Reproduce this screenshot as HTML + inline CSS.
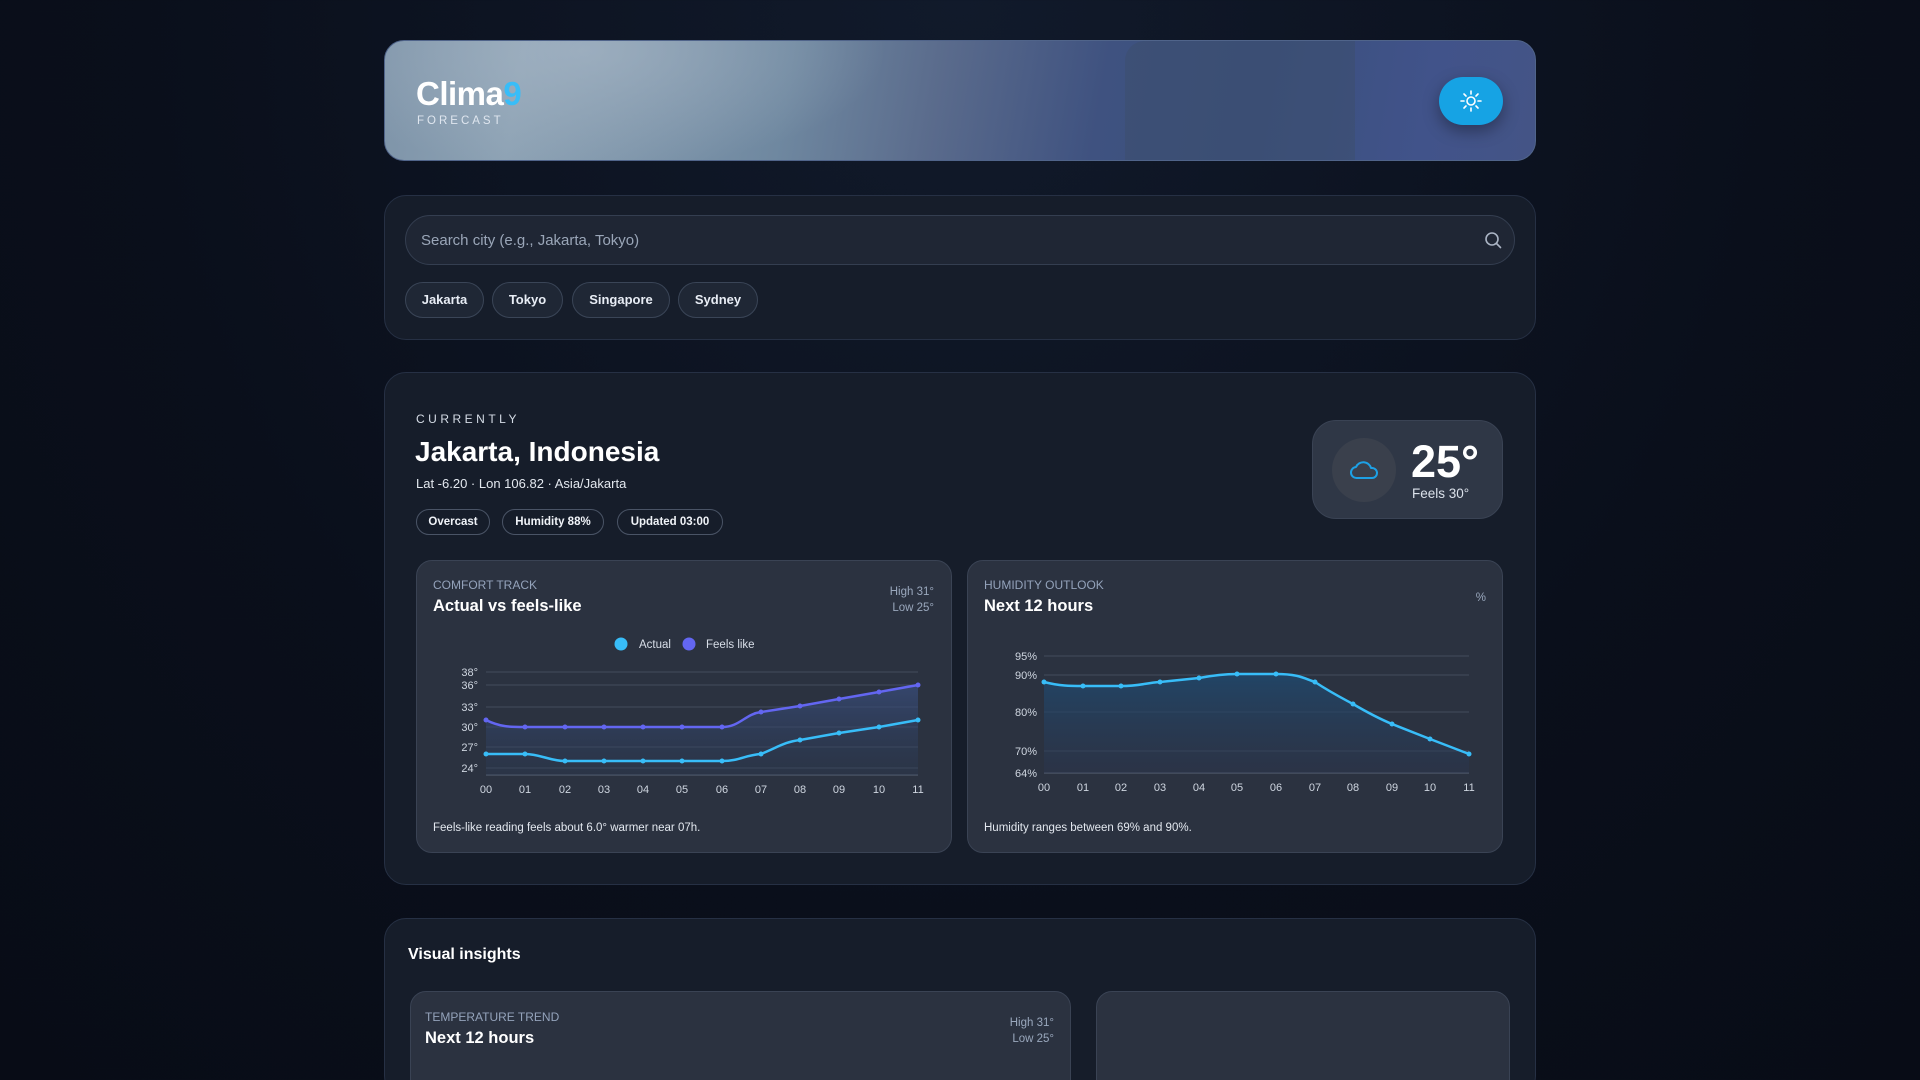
<!DOCTYPE html>
<html><head><meta charset="utf-8"><style>
*{box-sizing:border-box;margin:0;padding:0}
html{width:1920px;height:1080px;overflow:hidden}
body{width:1920px;height:1080px;overflow:hidden;background:radial-gradient(ellipse at 50% 0%,#111a2b 0%,#0a0f1b 60%,#080c16 100%);font-family:"Liberation Sans",sans-serif;color:#e8edf5;position:relative}
.a{position:absolute}
.card{position:absolute;background:#161d2a;border:1px solid #263044;border-radius:22px}
.chip{position:absolute;height:36px;border:1px solid #3a4557;border-radius:18px;background:#1f2735;font-size:13px;font-weight:bold;color:#e8edf5;line-height:34px;text-align:center}
.badge{position:absolute;height:26px;border:1px solid #4a5466;border-radius:13px;background:#161d2a;font-size:11.5px;font-weight:bold;line-height:24px;text-align:center;color:#f0f3f8}
.cc{position:absolute;background:#2b3240;border:1px solid #3a4354;border-radius:16px}
.lbl{font-size:12px;color:#94a3bb;text-transform:uppercase}
.ttl{font-size:16.5px;font-weight:bold;color:#fff}
.sm{font-size:11.5px;color:#9aa8bd;text-align:right}
svg text{font-family:"Liberation Sans",sans-serif}
</style></head><body>
<div class="a" style="left:384px;top:40px;width:1152px;height:121px;border-radius:20px;border:1px solid #50648a;background:radial-gradient(ellipse 300px 120px at 200px 10px,rgba(170,185,200,.6),transparent),linear-gradient(100deg,#7d93a8 0%,#8da2b4 12%,#6f88a0 35%,#5a6b8c 48%,#3f5280 62%,#3a4f7c 75%,#41538a 90%,#445486 100%);overflow:hidden">
<div class="a" style="left:740px;top:0;width:230px;height:121px;background:rgba(60,78,110,.55);border-radius:20px 0 0 0"></div>
</div>
<div class="a" style="left:416px;top:75px;font-size:33px;font-weight:bold;color:#fff;letter-spacing:-0.5px">Clima<span style="color:#38bdf8">9</span></div>
<div class="a" style="left:417px;top:115px;font-size:11.5px;letter-spacing:3px;color:#dfe6ef">FORECAST</div>
<div class="a" style="left:1439px;top:77px;width:64px;height:48px;border-radius:24px;background:#16a3e4;box-shadow:0 6px 16px rgba(0,0,0,.35)">
<svg width="64" height="48" viewBox="0 0 64 48"><g stroke="#fff" stroke-width="1.6" fill="none" stroke-linecap="round"><circle cx="32" cy="24" r="4"/><path d="M32 14v3M32 31v3M22 24h3M39 24h3M25 17l2 2M37 29l2 2M25 31l2-2M37 19l2-2"/></g></svg></div>
<div class="card" style="left:384px;top:195px;width:1152px;height:145px"></div>
<div class="a" style="left:405px;top:215px;width:1110px;height:50px;border:1px solid #343e50;border-radius:25px;background:#1f2634"></div>
<div class="a" style="left:421px;top:232px;font-size:15px;color:#9aa6b8">Search city (e.g., Jakarta, Tokyo)</div>
<svg class="a" style="left:1483px;top:230px" width="20" height="20" viewBox="0 0 20 20"><circle cx="9" cy="9" r="6" stroke="#aab4c4" stroke-width="1.6" fill="none"/><path d="M13.5 13.5l4 4" stroke="#aab4c4" stroke-width="1.6" stroke-linecap="round"/></svg>
<div class="chip" style="left:405px;top:282px;width:79px">Jakarta</div>
<div class="chip" style="left:492px;top:282px;width:71px">Tokyo</div>
<div class="chip" style="left:572px;top:282px;width:98px">Singapore</div>
<div class="chip" style="left:678px;top:282px;width:80px">Sydney</div>
<div class="card" style="left:384px;top:372px;width:1152px;height:513px"></div>
<div class="a" style="left:416px;top:412px;font-size:12px;letter-spacing:3.5px;color:#d5dce6">CURRENTLY</div>
<div class="a" style="left:415px;top:436px;font-size:28px;font-weight:bold;color:#fff">Jakarta, Indonesia</div>
<div class="a" style="left:416px;top:476px;font-size:13px;color:#e3e8ef">Lat -6.20 · Lon 106.82 · Asia/Jakarta</div>
<div class="badge" style="left:416px;top:509px;width:74px">Overcast</div>
<div class="badge" style="left:502px;top:509px;width:102px">Humidity 88%</div>
<div class="badge" style="left:617px;top:509px;width:106px">Updated 03:00</div>
<div class="a" style="left:1312px;top:420px;width:191px;height:99px;border-radius:24px;background:#2f3746;border:1px solid #3a4354"></div>
<div class="a" style="left:1332px;top:438px;width:64px;height:64px;border-radius:32px;background:#3a404c"></div>
<svg class="a" style="left:1348px;top:457px" width="32" height="26" viewBox="0 0 32 26"><path d="M9 21h15a5 5 0 0 0 0-10h-1A8 8 0 0 0 8 10a5.5 5.5 0 0 0 1 11z" fill="none" stroke="#1da1e6" stroke-width="2" stroke-linejoin="round"/></svg>
<div class="a" style="left:1411px;top:437px;font-size:45px;color:#fff;font-weight:bold;line-height:50px">25°</div>
<div class="a" style="left:1412px;top:486px;font-size:13.5px;color:#dbe1ea">Feels 30°</div>
<div class="cc" style="left:416px;top:560px;width:536px;height:293px"></div>
<div class="a lbl" style="left:433px;top:578px">Comfort track</div>
<div class="a ttl" style="left:433px;top:597px">Actual vs feels-like</div>
<div class="a sm" style="left:850px;top:584px;width:84px;line-height:16px">High 31°<br>Low 25°</div>
<div class="a" style="left:433px;top:822px;font-size:11.5px;color:#e3e8ef">Feels-like reading feels about 6.0° warmer near 07h.</div>
<div class="cc" style="left:967px;top:560px;width:536px;height:293px"></div>
<div class="a lbl" style="left:984px;top:578px">Humidity outlook</div>
<div class="a ttl" style="left:984px;top:597px">Next 12 hours</div>
<div class="a sm" style="left:1470px;top:592px;width:16px">%</div>
<div class="a" style="left:984px;top:822px;font-size:11.5px;color:#e3e8ef">Humidity ranges between 69% and 90%.</div>
<svg class="a" style="left:0;top:0" width="1920" height="1080">
<defs>
<linearGradient id="g1" x1="0" y1="0" x2="0" y2="1"><stop offset="0" stop-color="#3a4f80" stop-opacity=".7"/><stop offset="1" stop-color="#2a3a55" stop-opacity=".3"/></linearGradient>
<linearGradient id="g2" x1="0" y1="0" x2="0" y2="1"><stop offset="0" stop-color="#1f4a70" stop-opacity=".8"/><stop offset="1" stop-color="#2b3650" stop-opacity=".4"/></linearGradient>
</defs>
<circle cx="621" cy="644" r="6.5" fill="#38bdf8"/><text x="639" y="648" font-size="11.5" fill="#d8dee8">Actual</text>
<circle cx="689" cy="644" r="6.5" fill="#6366f1"/><text x="706" y="648" font-size="11.5" fill="#d8dee8">Feels like</text>
<g stroke="#434c5c" stroke-width="1"><path d="M486 672H918M486 685H918M486 707H918M486 727H918M486 747H918M486 768H918"/><path d="M486 775H918" stroke="#5a6476"/></g>
<g font-size="11" fill="#cfd6e0" text-anchor="end"><text x="478" y="676">38°</text><text x="478" y="689">36°</text><text x="478" y="711">33°</text><text x="478" y="731">30°</text><text x="478" y="751">27°</text><text x="478" y="772">24°</text></g>
<g font-size="11" fill="#cfd6e0" text-anchor="middle"><text x="486" y="793">00</text><text x="525" y="793">01</text><text x="565" y="793">02</text><text x="604" y="793">03</text><text x="643" y="793">04</text><text x="682" y="793">05</text><text x="722" y="793">06</text><text x="761" y="793">07</text><text x="800" y="793">08</text><text x="839" y="793">09</text><text x="879" y="793">10</text><text x="918" y="793">11</text></g>
<path d="M486 720C500 727 510 727 525 727L722 727C740 727 745 714 761 712L800 706 839 699 879 692 918 685V775H486Z" fill="url(#g1)"/>
<path d="M486 720C500 727 510 727 525 727L722 727C740 727 745 714 761 712L800 706 839 699 879 692 918 685" fill="none" stroke="#6366f1" stroke-width="2.5"/>
<path d="M486 754L525 754C540 754 550 761 565 761L722 761C740 761 745 755 761 754C780 746 785 742 800 740L839 733 879 727 918 720" fill="none" stroke="#38bdf8" stroke-width="2.5"/>
<g fill="#6366f1"><circle cx="486" cy="720" r="2.5"/><circle cx="525" cy="727" r="2.5"/><circle cx="565" cy="727" r="2.5"/><circle cx="604" cy="727" r="2.5"/><circle cx="643" cy="727" r="2.5"/><circle cx="682" cy="727" r="2.5"/><circle cx="722" cy="727" r="2.5"/><circle cx="761" cy="712" r="2.5"/><circle cx="800" cy="706" r="2.5"/><circle cx="839" cy="699" r="2.5"/><circle cx="879" cy="692" r="2.5"/><circle cx="918" cy="685" r="2.5"/></g>
<g fill="#38bdf8"><circle cx="486" cy="754" r="2.5"/><circle cx="525" cy="754" r="2.5"/><circle cx="565" cy="761" r="2.5"/><circle cx="604" cy="761" r="2.5"/><circle cx="643" cy="761" r="2.5"/><circle cx="682" cy="761" r="2.5"/><circle cx="722" cy="761" r="2.5"/><circle cx="761" cy="754" r="2.5"/><circle cx="800" cy="740" r="2.5"/><circle cx="839" cy="733" r="2.5"/><circle cx="879" cy="727" r="2.5"/><circle cx="918" cy="720" r="2.5"/></g>
<g stroke="#434c5c" stroke-width="1"><path d="M1044 656H1469M1044 675H1469M1044 712H1469M1044 751H1469"/><path d="M1044 773H1469" stroke="#5a6476"/></g>
<g font-size="11" fill="#cfd6e0" text-anchor="end"><text x="1037" y="660">95%</text><text x="1037" y="679">90%</text><text x="1037" y="716">80%</text><text x="1037" y="755">70%</text><text x="1037" y="777">64%</text></g>
<g font-size="11" fill="#cfd6e0" text-anchor="middle"><text x="1044" y="791">00</text><text x="1083" y="791">01</text><text x="1121" y="791">02</text><text x="1160" y="791">03</text><text x="1199" y="791">04</text><text x="1237" y="791">05</text><text x="1276" y="791">06</text><text x="1315" y="791">07</text><text x="1353" y="791">08</text><text x="1392" y="791">09</text><text x="1430" y="791">10</text><text x="1469" y="791">11</text></g>
<path d="M1044 682C1060 686 1070 686 1083 686L1121 686C1140 686 1145 683 1160 682L1199 678C1215 675 1225 674 1237 674L1276 674C1300 674 1305 679 1315 682C1330 692 1340 697 1353 704C1370 714 1380 719 1392 724L1430 739 1469 754V773H1044Z" fill="url(#g2)"/>
<path d="M1044 682C1060 686 1070 686 1083 686L1121 686C1140 686 1145 683 1160 682L1199 678C1215 675 1225 674 1237 674L1276 674C1300 674 1305 679 1315 682C1330 692 1340 697 1353 704C1370 714 1380 719 1392 724L1430 739 1469 754" fill="none" stroke="#38bdf8" stroke-width="2.5"/>
<g fill="#38bdf8"><circle cx="1044" cy="682" r="2.5"/><circle cx="1083" cy="686" r="2.5"/><circle cx="1121" cy="686" r="2.5"/><circle cx="1160" cy="682" r="2.5"/><circle cx="1199" cy="678" r="2.5"/><circle cx="1237" cy="674" r="2.5"/><circle cx="1276" cy="674" r="2.5"/><circle cx="1315" cy="682" r="2.5"/><circle cx="1353" cy="704" r="2.5"/><circle cx="1392" cy="724" r="2.5"/><circle cx="1430" cy="739" r="2.5"/><circle cx="1469" cy="754" r="2.5"/></g>
</svg>
<div class="card" style="left:384px;top:918px;width:1152px;height:180px"></div>
<div class="a" style="left:408px;top:946px;font-size:16px;font-weight:bold;color:#fff">Visual insights</div>
<div class="cc" style="left:410px;top:991px;width:661px;height:110px"></div>
<div class="a lbl" style="left:425px;top:1010px">Temperature trend</div>
<div class="a ttl" style="left:425px;top:1029px">Next 12 hours</div>
<div class="a sm" style="left:970px;top:1015px;width:84px;line-height:16px">High 31°<br>Low 25°</div>
<div class="cc" style="left:1096px;top:991px;width:414px;height:110px"></div>
</body></html>
